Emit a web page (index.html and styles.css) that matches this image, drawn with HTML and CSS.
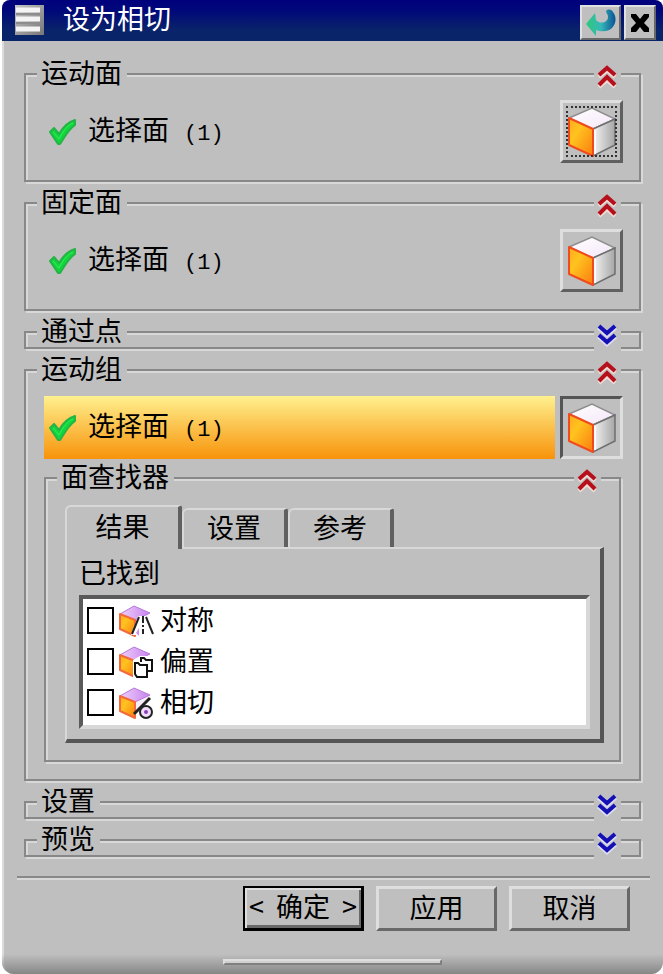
FILE: index.html
```html
<!DOCTYPE html>
<html lang="zh-CN">
<head>
    <meta charset="UTF-8">
    <meta name="viewport" content="width=device-width, initial-scale=1.0">
    <title>设为相切</title>
    <link rel="stylesheet" href="styles.css">
</head>
<body>
    <!-- shared icons -->
    <svg class="sprite" aria-hidden="true">
        <defs>
            <linearGradient id="faceOrange" x1="0" y1="0" x2="1" y2="1">
                <stop offset="0" stop-color="#ffa81c"/>
                <stop offset="0.35" stop-color="#ffc31f"/>
                <stop offset="1" stop-color="#fb7c10"/>
            </linearGradient>
            <linearGradient id="faceGrey" x1="0" y1="0" x2="1" y2="0">
                <stop offset="0" stop-color="#f4f4f4"/>
                <stop offset="1" stop-color="#a6a6a6"/>
            </linearGradient>
            <linearGradient id="faceTop" x1="0" y1="0" x2="1" y2="1">
                <stop offset="0" stop-color="#ffffff"/>
                <stop offset="1" stop-color="#f3e6f8"/>
            </linearGradient>
            <linearGradient id="facePurple" x1="0" y1="0" x2="1" y2="0">
                <stop offset="0" stop-color="#edd0fa"/>
                <stop offset="1" stop-color="#c983ee"/>
            </linearGradient>
            <linearGradient id="arrowFill" x1="0" y1="0" x2="1" y2="0">
                <stop offset="0" stop-color="#2ec878"/>
                <stop offset="0.5" stop-color="#36b9b8"/>
                <stop offset="1" stop-color="#0b5296"/>
            </linearGradient>
            <linearGradient id="menuFill" x1="0" y1="0" x2="1" y2="1">
                <stop offset="0" stop-color="#c4c4c4"/>
                <stop offset="1" stop-color="#777777"/>
            </linearGradient>
        </defs>
        <symbol id="check" viewBox="0 0 29 28">
            <path d="M2 14 L6 10 L11 16 C15 9 20 4 27 2 L27 7 C21 11 17 18 12 26 L10 26 Z" fill="#11d63c" stroke="#25b445" stroke-width="2" stroke-linejoin="round"/>
            <path d="M5 14 L11 21 C15 13 20 7 25 5" fill="none" stroke="#2ff05a" stroke-width="1"/>
        </symbol>
        <symbol id="cube" viewBox="0 0 48 50">
            <path d="M1 11 L24 1 L47 12 L25 22 Z" fill="url(#faceTop)" stroke="#8d8d8d" stroke-width="1.5"/>
            <path d="M25 22 L47 12 L47 38 L25 49 Z" fill="url(#faceGrey)" stroke="#6f6f6f" stroke-width="1.5"/>
            <path d="M1 11 L25 22 L25 49 L1 38 Z" fill="url(#faceOrange)" stroke="#f04b1e" stroke-width="2" stroke-linejoin="round"/>
            <path d="M27 23 L27 47" stroke="#ffffff" stroke-width="1.5"/>
        </symbol>
        <symbol id="chevUp" viewBox="0 0 21 24">
            <path d="M2 12 L10 5 L18 12 M2 22 L10 15 L18 22" stroke="#f4dcd6" stroke-width="4"/>
            <path d="M2 10 L10 3 L18 10 M2 20 L10 12 L18 20" stroke="#b5101c" stroke-width="4"/>
        </symbol>
        <symbol id="chevDown" viewBox="0 0 21 24">
            <path d="M2 4 L10 11 L18 4 M2 13 L10 20 L18 13" stroke="#dcdcf4" stroke-width="6"/>
            <path d="M2 3 L10 10 L18 3 M2 12 L10 19 L18 12" stroke="#1410b4" stroke-width="4"/>
        </symbol>
        <symbol id="miniCube" viewBox="0 0 36 34">
            <path d="M16 15 L31 9 L29 24 L16 31 Z" fill="#f6ecfb"/>
            <path d="M2 10 L16 2 L32 9 L17 16 Z" fill="url(#facePurple)" stroke="#b678d8" stroke-width="1"/>
            <path d="M2 10 L17 16 L17 32 L2 25 Z" fill="url(#faceOrange)" stroke="#f4683c" stroke-width="2" stroke-linejoin="round"/>
        </symbol>
    </svg>

    <div class="dialog" role="dialog" aria-labelledby="dialogTitle">
        <header class="titlebar">
            <svg class="menu-icon" viewBox="0 0 29 30" aria-hidden="true">
                <rect width="29" height="30" fill="url(#menuFill)"/>
                <path d="M1 5 H25 M1 14 H25 M1 24 H25" stroke="#f4f4f4" stroke-width="5"/>
                <path d="M1 9 H25 M1 18 H25" stroke="#8d8d8d" stroke-width="2"/>
            </svg>
            <h1 id="dialogTitle">设为相切</h1>
            <button type="button" class="title-btn reset" aria-label="重置">
                <svg width="32" height="28" viewBox="0 0 32 28" aria-hidden="true">
                    <path d="M1 15 L10 4 L11 11 C16 16 23 13 23 8 C23 5 21 4 21 2 C23 0 26 0 28 3 C32 8 31 15 27 19 C23 23 16 23 11 21 L11 27 Z" fill="url(#arrowFill)"/>
                </svg>
            </button>
            <button type="button" class="title-btn" aria-label="关闭">
                <svg width="20" height="20" viewBox="0 0 20 20" aria-hidden="true">
                    <path d="M1 1 H6 L10 6 L14 1 H19 V4 L14 10 L19 15 V19 H14 L10 14 L6 19 H1 V15 L6 10 L1 4 Z" fill="#000000"/>
                </svg>
            </button>
        </header>

        <main class="groups">
            <section class="group">
                <div class="group-head">
                    <h2>运动面</h2>
                    <button type="button" class="toggle" aria-label="收起运动面" aria-expanded="true"><svg aria-hidden="true"><use href="#chevUp"/></svg></button>
                </div>
                <div class="group-body">
                    <div class="select-row">
                        <div class="select-label"><svg class="check" aria-hidden="true"><use href="#check"/></svg><span>选择面 <span class="count">(1)</span></span></div>
                        <button type="button" class="face-btn focused" aria-label="选择运动面"><svg aria-hidden="true"><use href="#cube"/></svg></button>
                    </div>
                </div>
            </section>

            <section class="group">
                <div class="group-head">
                    <h2>固定面</h2>
                    <button type="button" class="toggle" aria-label="收起固定面" aria-expanded="true"><svg aria-hidden="true"><use href="#chevUp"/></svg></button>
                </div>
                <div class="group-body">
                    <div class="select-row">
                        <div class="select-label"><svg class="check" aria-hidden="true"><use href="#check"/></svg><span>选择面 <span class="count">(1)</span></span></div>
                        <button type="button" class="face-btn" aria-label="选择固定面"><svg aria-hidden="true"><use href="#cube"/></svg></button>
                    </div>
                </div>
            </section>

            <section class="group">
                <div class="group-head">
                    <h2>通过点</h2>
                    <button type="button" class="toggle" aria-label="展开通过点" aria-expanded="false"><svg aria-hidden="true"><use href="#chevDown"/></svg></button>
                </div>
            </section>

            <section class="group">
                <div class="group-head">
                    <h2>运动组</h2>
                    <button type="button" class="toggle" aria-label="收起运动组" aria-expanded="true"><svg aria-hidden="true"><use href="#chevUp"/></svg></button>
                </div>
                <div class="group-body">
                    <div class="select-row active">
                        <div class="select-label"><svg class="check" aria-hidden="true"><use href="#check"/></svg><span>选择面 <span class="count">(1)</span></span></div>
                        <button type="button" class="face-btn pressed" aria-label="选择运动组" aria-pressed="true"><svg aria-hidden="true"><use href="#cube"/></svg></button>
                    </div>

                    <section class="group finder">
                        <div class="group-head">
                            <h2>面查找器</h2>
                            <button type="button" class="toggle" aria-label="收起面查找器" aria-expanded="true"><svg aria-hidden="true"><use href="#chevUp"/></svg></button>
                        </div>
                        <div class="finder-body">
                            <div class="tabs" role="tablist">
                                <button type="button" class="tab selected" role="tab" aria-selected="true">结果</button>
                                <button type="button" class="tab" role="tab" aria-selected="false">设置</button>
                                <button type="button" class="tab" role="tab" aria-selected="false">参考</button>
                            </div>
                            <div class="tab-panel" role="tabpanel">
                                <h3>已找到</h3>
                                <ul class="results">
                                    <li>
                                        <label>
                                            <input type="checkbox">
                                            <svg class="mini" viewBox="0 0 36 34" aria-hidden="true">
                                                <use href="#miniCube"/>
                                                <path d="M13 31 L20 12 H29 L36 31 Z" fill="#ffffff"/>
                                                <path d="M21 13 L14 30 M28 13 L35 30" stroke="#222222" stroke-width="2"/>
                                                <path d="M25 12 V30" stroke="#222222" stroke-width="2" stroke-dasharray="7 2 2 2"/>
                                                <path d="M18 29 L21 24 V32 Z" fill="#cf8ff0"/>
                                            </svg>
                                            <span>对称</span>
                                        </label>
                                    </li>
                                    <li>
                                        <label>
                                            <input type="checkbox">
                                            <svg class="mini" viewBox="0 0 36 34" aria-hidden="true">
                                                <use href="#miniCube"/>
                                                <path d="M15 15 L22 11 H35 V28 L29 33 H15 Z" fill="#ffffff"/>
                                                <path d="M23 17 V13 H26 L28 15 H34 V26 H30" fill="none" stroke="#111111" stroke-width="2"/>
                                                <path d="M17 18 H20 L22 20 H29 V32 H19 L17 29 Z" fill="#ffffff" stroke="#111111" stroke-width="2"/>
                                            </svg>
                                            <span>偏置</span>
                                        </label>
                                    </li>
                                    <li>
                                        <label>
                                            <input type="checkbox">
                                            <svg class="mini" viewBox="0 0 36 34" aria-hidden="true">
                                                <use href="#miniCube"/>
                                                <path d="M16 27 L32 10 L36 20 L34 32 L22 33 Z" fill="#ffffff"/>
                                                <path d="M16 28 L32 12" stroke="#222222" stroke-width="3"/>
                                                <circle cx="28" cy="26" r="6" fill="#f0dcfb" stroke="#222222" stroke-width="2"/>
                                                <circle cx="28" cy="26" r="2" fill="#8a3fc0"/>
                                            </svg>
                                            <span>相切</span>
                                        </label>
                                    </li>
                                </ul>
                            </div>
                        </div>
                    </section>
                </div>
            </section>

            <section class="group">
                <div class="group-head">
                    <h2>设置</h2>
                    <button type="button" class="toggle" aria-label="展开设置" aria-expanded="false"><svg aria-hidden="true"><use href="#chevDown"/></svg></button>
                </div>
            </section>

            <section class="group">
                <div class="group-head">
                    <h2>预览</h2>
                    <button type="button" class="toggle" aria-label="展开预览" aria-expanded="false"><svg aria-hidden="true"><use href="#chevDown"/></svg></button>
                </div>
            </section>
        </main>

        <footer class="actions">
            <button type="button" class="btn default"><span>&lt;</span><span>确定</span><span>&gt;</span></button>
            <button type="button" class="btn">应用</button>
            <button type="button" class="btn">取消</button>
        </footer>
        <div class="grip-bar"><div class="grip"></div></div>
    </div>
</body>
</html>
```

FILE: styles.css
```css
* {
    box-sizing: border-box;
}
body {
    margin: 0;
    background-color: #ffffff;
    color: #000000;
    font-family: "Noto Sans CJK SC", "Liberation Sans", sans-serif;
    font-size: 27px;
    line-height: 28px;
}
h1, h2, h3, ul {
    margin: 0;
    padding: 0;
    font-size: 27px;
    font-weight: normal;
}
button {
    margin: 0;
    padding: 0;
    border: none;
    background-color: #bfbfbf;
    color: #000000;
    font: inherit;
    cursor: pointer;
}
svg {
    display: block;
}
.sprite {
    width: 0;
    height: 0;
}
.dialog {
    display: flex;
    flex-direction: column;
    min-height: 100vh;
    margin-left: 2px;
    background-color: #bfbfbf;
    border-radius: 8px 8px 12px 12px;
    box-shadow: inset 2px 0 0 #dcdcdc;
    overflow: hidden;
}

/* title bar */
.titlebar {
    display: flex;
    align-items: center;
    gap: 3px;
    height: 41px;
    padding: 0 7px 1px 13px;
    background: linear-gradient(#00007c, #00087a 25%, #0a246a 75%);
}
.titlebar h1 {
    flex: 1;
    padding: 0 0 4px 16px;
    color: #ffffff;
    line-height: 36px;
}
.menu-icon {
    width: 29px;
    height: 30px;
}
.title-btn {
    display: flex;
    align-items: center;
    justify-content: center;
    align-self: flex-end;
    width: 32px;
    height: 35px;
    border: 2px solid;
    border-color: #e0e0e0 #686868 #686868 #e0e0e0;
}
.title-btn.reset {
    width: 41px;
}

/* groups */
.groups {
    display: flex;
    flex-direction: column;
    gap: 20px;
    padding: 32px 22px 19px;
}
.group {
    border: 2px solid #888888;
    box-shadow: 2px 2px 0 #d8d8d8, inset 2px 2px 0 #d8d8d8;
}
.group-head {
    display: flex;
    justify-content: space-between;
    align-items: flex-start;
    height: 28px;
    margin-top: -14px;
    padding: 0 18px 0 11px;
}
.group-head h2 {
    padding: 0 5px 0 4px;
    background-color: #bfbfbf;
    line-height: 22px;
}
.toggle {
    display: flex;
    align-items: center;
    justify-content: center;
    width: 27px;
    height: 32px;
}
.toggle svg {
    width: 21px;
    height: 24px;
    fill: none;
}
.group-body {
    padding: 11px 16px 17px 18px;
}
.select-row {
    display: flex;
    gap: 5px;
}
.select-label {
    display: flex;
    flex: 1;
    align-items: center;
    gap: 11px;
    padding-left: 4px;
}
.active .select-label {
    background: linear-gradient(#fff08f, #fbc14b 50%, #f8930a);
}
.check {
    width: 29px;
    height: 28px;
}
.count {
    margin-left: 9px;
    font-family: "Liberation Mono", monospace;
    font-size: 22px;
}
.face-btn {
    display: flex;
    align-items: center;
    justify-content: center;
    width: 63px;
    height: 63px;
    border: 3px solid;
    border-color: #dedede #606060 #606060 #dedede;
}
.face-btn svg {
    width: 48px;
    height: 50px;
}
.face-btn.focused {
    outline: 2px dotted #333333;
    outline-offset: -8px;
}
.face-btn.pressed {
    border-color: #555555 #dedede #dedede #555555;
}

/* face finder */
.finder {
    margin: 18px 2px 0 0;
}
.finder-body {
    padding: 12px 15px 17px 19px;
}
.tabs {
    display: flex;
    align-items: flex-end;
}
.tab {
    width: 106px;
    height: 39px;
    padding-bottom: 4px;
    border: solid;
    border-width: 2px 4px 0 2px;
    border-color: #d8d8d8 #606060 #d8d8d8 #d8d8d8;
    border-radius: 6px 3px 0 0;
}
.tab.selected {
    width: 117px;
    height: 44px;
    margin-bottom: -2px;
}
.tab-panel {
    padding: 9px 10px 10px 12px;
    border: solid;
    border-width: 2px 4px 4px 2px;
    border-color: #d8d8d8 #555555 #555555 #d8d8d8;
}
.results {
    margin-top: 9px;
    padding: 1px 0 2px 4px;
    border: 4px solid;
    border-color: #5a5a5a #d8d8d8 #d8d8d8 #5a5a5a;
    background-color: #ffffff;
    list-style: none;
}
.results label {
    display: flex;
    align-items: center;
    height: 41px;
}
.results span {
    padding-bottom: 4px;
}
.results input {
    appearance: none;
    width: 27px;
    height: 27px;
    margin: 0 4px 0 0;
    border: 2px solid #000000;
    background-color: #ffffff;
}
.results input:checked {
    background-color: #000000;
}
.mini {
    width: 36px;
    height: 34px;
    margin-right: 6px;
}

/* bottom buttons */
.actions {
    display: flex;
    justify-content: flex-end;
    gap: 12px;
    margin: 0 13px 0 15px;
    padding: 8px 20px 0 0;
    border-top: 2px solid #888888;
    box-shadow: inset 0 2px 0 #d8d8d8;
}
.btn {
    width: 121px;
    height: 45px;
    padding-bottom: 4px;
    border: 3px solid;
    border-color: #dedede #686868 #686868 #dedede;
}
.btn.default {
    display: flex;
    align-items: center;
    justify-content: space-between;
    padding: 0 4px 4px;
    border-width: 2px 3px 3px 2px;
    border-color: #000000;
    box-shadow: inset 2px 2px 0 #dedede, inset -2px -3px 0 #686868;
}
.grip-bar {
    display: flex;
    flex: 1;
    align-items: flex-end;
    justify-content: center;
    padding-bottom: 9px;
    background: linear-gradient(to top, #868686, rgba(134, 134, 134, 0) 20px);
}
.grip {
    width: 33%;
    height: 6px;
    border: 2px solid;
    border-color: #dedede #808080 #808080 #dedede;
    background-color: #d0d0d0;
}
```
